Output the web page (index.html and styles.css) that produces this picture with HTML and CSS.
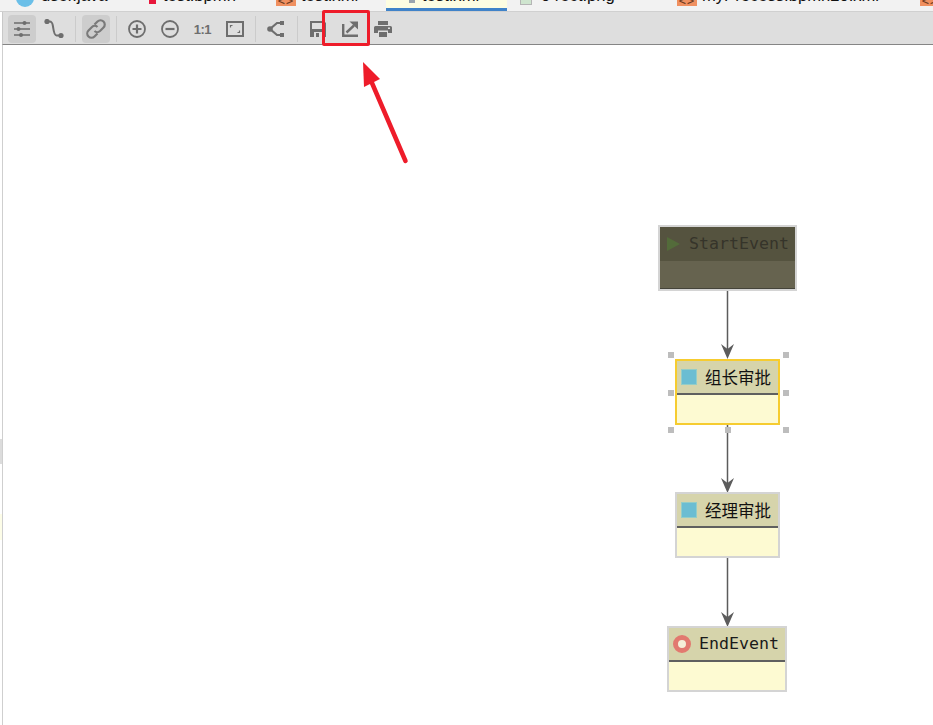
FILE: index.html
```html
<!DOCTYPE html>
<html lang="zh">
<head>
<meta charset="utf-8">
<title>test.xml</title>
<link rel="stylesheet" href="styles.css">
</head>
<body>
<div class="app">
  <div class="tabs">
    <div class="tab t1"><span class="ico-circle"></span><span class="tab-text">user.java</span></div>
    <div class="tab t2"><span class="ico-red"></span><span class="tab-text">test.bpmn</span></div>
    <div class="tab t3"><span class="ico-xml">&lt;&gt;</span><span class="tab-text">test.xml</span></div>
    <div class="tab t4 active"><svg class="ico-diagram" width="20" height="12" viewBox="0 0 20 12"><path d="M0 1h20v2H0z" fill="#b4bcc4"/><rect x="12" y="0" width="6" height="6" fill="#9aa5ae"/></svg><span class="tab-text">test.xml</span></div>
    <div class="tab t5"><span class="ico-png"></span><span class="tab-text">0 rect.png</span></div>
    <div class="tab t6"><span class="ico-xml">&lt;&gt;</span><span class="tab-text">myProcess.bpmn20.xml</span></div>
    <div class="tab t7"><span class="ico-xml">&lt;&gt;</span></div>
  </div>

  <div class="toolbar">
    <div class="group g1">
      <button class="btn on"><svg width="20" height="20" viewBox="0 0 20 20" fill="none" stroke="#6e6e6e" stroke-width="1.6"><path d="M2 4h16M2 10h16M2 16h16"/><circle cx="12.500" cy="4" r="2" fill="#6e6e6e" stroke="none"/><circle cx="6.500" cy="10" r="2" fill="#6e6e6e" stroke="none"/><circle cx="9" cy="16" r="2" fill="#6e6e6e" stroke="none"/></svg></button>
      <button class="btn"><svg width="20" height="20" viewBox="0 0 20 20" fill="none" stroke="#6e6e6e" stroke-width="2"><path d="M3 2.500h2.500c2.500 0 3 1.500 3.500 5s1 9 3.500 9h5"/><circle cx="3" cy="2.500" r="2.600" fill="#6e6e6e" stroke="none"/><circle cx="17" cy="16.500" r="2.600" fill="#6e6e6e" stroke="none"/></svg></button>
    </div>
    <i class="sep s1"></i>
    <div class="group g2">
      <button class="btn on"><svg width="22" height="22" viewBox="0 0 22 22" fill="none" stroke="#7a7a7a" stroke-width="2.200"><path d="M9.500 6.500l3-3a4 4 0 0 1 6 6l-3.500 3.500a4 4 0 0 1-5.500 0"/><path d="M12.500 15.500l-3 3a4 4 0 0 1-6-6l3.500-3.500a4 4 0 0 1 5.500 0"/></svg></button>
    </div>
    <i class="sep s2"></i>
    <div class="group g3">
      <button class="btn"><svg width="18" height="18" viewBox="0 0 18 18" fill="none" stroke="#6e6e6e" stroke-width="1.800"><circle cx="9" cy="9" r="8"/><path d="M4.500 9h9M9 4.500v9" stroke-width="2.200"/></svg></button>
      <button class="btn"><svg width="18" height="18" viewBox="0 0 18 18" fill="none" stroke="#6e6e6e" stroke-width="1.800"><circle cx="9" cy="9" r="8"/><path d="M4.500 9h9" stroke-width="2.200"/></svg></button>
      <button class="btn"><span class="ratio">1:1</span></button>
      <button class="btn"><svg width="18" height="16" viewBox="0 0 18 16" fill="none" stroke="#6e6e6e"><rect x="1" y="1" width="16" height="14" stroke-width="2"/><path d="M4.500 6.500V4.500h2M13.500 9.500v2h-2" stroke-width="1.200"/></svg></button>
    </div>
    <i class="sep s3"></i>
    <div class="group g4">
      <button class="btn"><svg width="18" height="16" viewBox="0 0 18 16" fill="none" stroke="#6e6e6e" stroke-width="2.200"><path d="M16 2H10L3 8l7 6h6"/><circle cx="3" cy="8" r="2.800" fill="#6e6e6e" stroke="none"/><rect x="13" y="0" width="4" height="4" fill="#6e6e6e" stroke="none"/><rect x="13" y="12" width="4" height="4" fill="#6e6e6e" stroke="none"/></svg></button>
    </div>
    <i class="sep s4"></i>
    <div class="group g5">
      <button class="btn"><svg width="16" height="16" viewBox="0 0 16 16"><path d="M0 0h14l2 2v14H0z" fill="#6e6e6e"/><rect x="2" y="2" width="11" height="6" fill="#dedede"/><rect x="4" y="11" width="8" height="5" fill="#dedede"/><rect x="6" y="12" width="3" height="4" fill="#6e6e6e"/></svg></button>
      <button class="btn"><svg width="16" height="16" viewBox="0 0 16 16" fill="none" stroke="#6e6e6e" stroke-width="2.400"><path d="M1.200 3v11.800H16"/><path d="M4.500 11.500L12 4.500"/><path d="M7.500 0.500H16V8.500z" stroke="none" fill="#6e6e6e"/></svg></button>
      <button class="btn"><svg width="18" height="16" viewBox="0 0 18 16"><rect x="4" y="0" width="10" height="4" fill="#6e6e6e"/><path d="M1.500 5h15q1.500 0 1.500 1.500V12h-4V9.500H4V12H0V6.500Q0 5 1.500 5z" fill="#6e6e6e"/><rect x="5" y="11" width="8" height="5" fill="#6e6e6e"/><rect x="14" y="6.500" width="2" height="1.500" fill="#dedede"/></svg></button>
    </div>
  </div>

  <div class="canvas">
    <svg class="wires" width="933" height="725" viewBox="0 0 933 725" fill="none">
      <g stroke="#5c5c5c" stroke-width="1.500">
        <path d="M727.500 291V350M727.500 425V484M727.500 558V618"/>
      </g>
      <g fill="#5c5c5c">
        <path d="M721 344l6.500 5 6.500-5-6.500 15z"/>
        <path d="M721 478l6.500 5 6.500-5-6.500 15z"/>
        <path d="M721 612l6.500 5 6.500-5-6.500 15z"/>
      </g>
    </svg>

    <div class="node start">
      <div class="head"><svg class="play" width="13" height="14" viewBox="0 0 13 14"><path d="M0 0l13 7-13 7z" fill="#536b3a"/></svg><span class="mono">StartEvent</span></div>
    </div>

    <div class="node task selected">
      <div class="head"><span class="square"></span><span class="cjk">组长审批</span></div>
    </div>
    <i class="grip g-tl"></i><i class="grip g-tr"></i><i class="grip g-ml"></i><i class="grip g-mr"></i><i class="grip g-bl"></i><i class="grip g-bm"></i><i class="grip g-br"></i>

    <div class="node task second">
      <div class="head"><span class="square"></span><span class="cjk">经理审批</span></div>
    </div>

    <div class="node end">
      <div class="head"><span class="ring"></span><span class="mono">EndEvent</span></div>
    </div>
  </div>

  <div class="mark"></div>
  <svg class="arrow" width="60" height="115" viewBox="0 0 60 115">
    <path d="M45.500 101L12 23" stroke="#ee1c2a" stroke-width="4.500" stroke-linecap="round" fill="none"/>
    <path d="M3 2l1 25 16-8z" fill="#ee1c2a"/>
  </svg>
  <i class="edge e1"></i><i class="edge e2"></i>
</div>
</body>
</html>
```

FILE: styles.css
```css
* { box-sizing: border-box; }
html, body { margin: 0; padding: 0; background: #fff; }
body { width: 933px; height: 725px; overflow: hidden; font-family: "Liberation Sans", "Noto Sans CJK SC", sans-serif; }
.app { position: relative; width: 933px; height: 725px; display: flex; flex-direction: column; }

.tabs { height: 12px; flex: none; display: flex; overflow: hidden; background: #f2f2f2; border-bottom: 1px solid #d0d0d0; }
.tab { height: 11px; display: flex; align-items: flex-end; flex: none; position: relative; color: #111; font-size: 16.6px; }
.tab-text { position: absolute; bottom: 6px; line-height: 18px; white-space: nowrap; }
.t1 { width: 147px; } .t1 .tab-text { left: 41px; }
.t2 { width: 129px; } .t2 .tab-text { left: 16px; }
.t3 { width: 110px; } .t3 .tab-text { left: 25px; }
.t4 { width: 121px; background: #fdfde2; border-bottom: 3px solid #4083c9; } .t4 .tab-text { left: 36px; bottom: 3px; }
.t5 { width: 170px; } .t5 .tab-text { left: 34px; }
.t6 { width: 243px; } .t6 .tab-text { left: 25px; }
.t7 { width: 16px; }

.ico-circle { position: absolute; left: 16px; top: -11px; width: 18px; height: 18px; border-radius: 50%; background: #6bbfe8; }
.ico-red { position: absolute; left: 2px; top: -1px; width: 7px; height: 5px; background: #e8183c; }
.ico-xml { position: absolute; left: 0; top: -9px; width: 20px; height: 15px; background: #f09060; color: #6b3a20; font: 12px/20px "DejaVu Sans Mono", monospace; letter-spacing: 1px; text-align: center; overflow: hidden; }
.ico-diagram { position: absolute; left: 11px; top: -3px; }
.ico-png { position: absolute; left: 13px; top: -6px; width: 12px; height: 11px; background: #cfe5cf; border: 1px solid #b5b5b5; }

.toolbar { height: 33px; flex: none; display: flex; align-items: center; margin-left: 2px; background: #dedede; border-bottom: 1px solid #858585; border-left: 1px solid #c8c8c8; padding: 2px 0 0 5px; }
.group { display: flex; gap: 4px; }
.g3 { gap: 4.67px; }
.g5 { gap: 4.5px; }
.btn { width: 28px; height: 28px; border: 0; padding: 0; background: none; border-radius: 4px; display: flex; align-items: center; justify-content: center; }
.btn.on { background: #cdcdcd; }
.ratio { font: bold 13px/1 "Liberation Sans", sans-serif; color: #6e6e6e; letter-spacing: -.6px; }
.sep { width: 1px; height: 26px; background: #cbcbcb; margin: 0 6px; flex: none; }
.s1 { margin-left: 7px; }
.s4 { margin-left: 7px; }

.canvas { position: relative; flex: 1; margin-left: 2px; border-left: 1px solid #cfcfcf; }
.wires { position: absolute; left: -3px; top: -45px; }

.node { position: absolute; background: #fdfad2; border: 2px solid #d4d4d4; overflow: hidden; }
.head { height: 34px; background: #d6d4ab; border-bottom: 2px solid #5f5f5f; display: flex; align-items: center; }
.mono { font: 16.6px/1 "DejaVu Sans Mono", monospace; color: #1a1a1a; }
.cjk { font: 16.5px/1 "Noto Sans CJK SC", sans-serif; color: #111; }
.square { width: 16px; height: 16px; background: #6bbdd2; border: 1px solid #93cdc8; margin: 0 8px 0 4px; flex: none; }
.ring { width: 18px; height: 18px; border-radius: 50%; border: 5px solid #e2796f; background: #f5efd8; margin: 0 8px 0 4px; flex: none; }

.start { left: 655px; top: 180px; width: 139px; height: 66px; background: #66634f; box-shadow: inset 0 -1px #45443a; }
.start .head { height: 34px; background: #55533f; border-bottom: 0; }
.start .mono { color: #35342a; }
.play { margin: 0 9px 0 7px; flex: none; }
.task { width: 105px; height: 66px; }
.selected { left: 672px; top: 314px; border-color: #f6cc30; }
.second { left: 672px; top: 447px; }
.end { left: 664px; top: 581px; width: 120px; height: 66px; }

.grip { position: absolute; width: 6px; height: 6px; background: #bdbdbd; }
.g-tl { left: 665px; top: 307px; } .g-tr { left: 780px; top: 307px; }
.g-ml { left: 665px; top: 345px; } .g-mr { left: 780px; top: 345px; }
.g-bl { left: 665px; top: 382px; } .g-bm { left: 722px; top: 382px; } .g-br { left: 780px; top: 382px; }

.mark { position: absolute; left: 322px; top: 10px; width: 48px; height: 36px; border: 3px solid #ee1c2a; border-radius: 2px; }
.arrow { position: absolute; left: 360px; top: 60px; }
.edge { position: absolute; left: 0; width: 2px; }
.e1 { top: 439px; height: 25px; background: #dcdcdc; }
.e2 { top: 514px; height: 26px; background: #fdfde8; }
```
